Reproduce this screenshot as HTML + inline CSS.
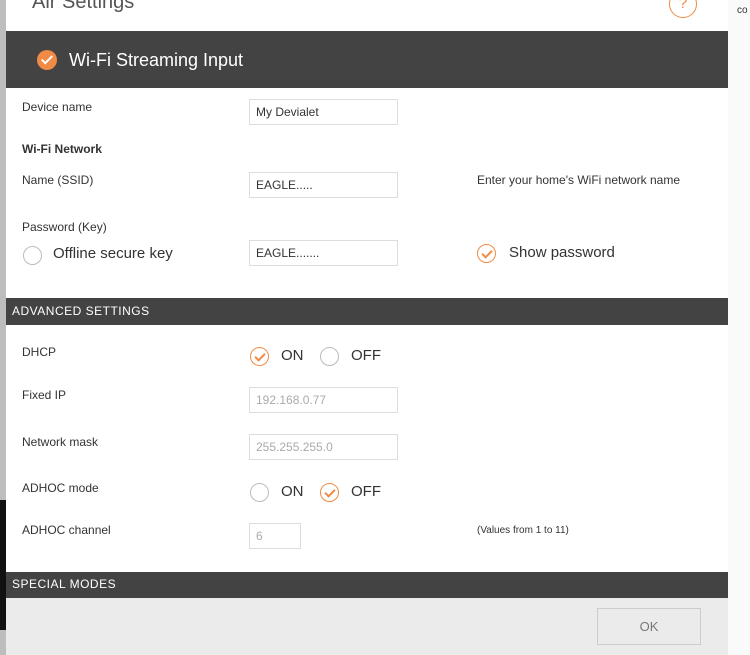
<!DOCTYPE html>
<html><head><style>
body{margin:0;width:750px;height:655px;position:relative;overflow:hidden;background:#fff;font-family:"Liberation Sans",sans-serif;color:#333}
.a{position:absolute}
.t{font-size:12px;color:#333}
.in{position:absolute;border:1px solid #ddd;background:#fff;font-size:12px;padding-left:6px;box-sizing:border-box;line-height:24px}
.bar{position:absolute;left:6px;width:722px;background:#434343;color:#fff;font-size:12px;letter-spacing:.5px}
.rad{position:absolute;width:17px;height:17px;border:1.5px solid #bbb;border-radius:50%}
.chk{position:absolute;width:17px;height:17px;border:1.5px solid #f08a45;border-radius:50%}
.chk:after{content:"";position:absolute;left:6px;top:3px;width:4px;height:8px;border:solid #f08a45;border-width:0 2px 2px 0;transform:rotate(45deg)}
</style></head><body>
<div class="a" style="left:0;top:0;width:6px;height:655px;background:#bdbdbd"></div>
<div class="a" style="left:0;top:500px;width:6px;height:130px;background:#111"></div>
<div class="a" style="left:6px;top:0;width:722px;height:598px;background:#fff"></div>
<div class="a" style="left:6px;top:598px;width:722px;height:57px;background:#ebebeb"></div>
<div class="a" style="left:728px;top:0;width:22px;height:655px;background:#fafafa"></div>
<div class="a" style="left:32px;top:-9px;font-size:20px;color:#555">Air Settings</div>
<div class="a" style="left:669px;top:-10px;width:26px;height:26px;border:1.5px solid #f08a45;border-radius:50%;color:#f08a45;text-align:center;font-size:16px;line-height:26px">?</div>
<div class="a" style="left:737px;top:5px;font-size:10px">co</div>
<div class="bar" style="top:31px;height:57px"></div>
<div class="a" style="left:37px;top:50px;width:20px;height:20px;border-radius:50%;background:#f08a45"></div>
<div class="a" style="left:44px;top:53px;width:4px;height:9px;border:solid #fff;border-width:0 2px 2px 0;transform:rotate(45deg)"></div>
<div class="a" style="left:69px;top:50px;font-size:18px;color:#fff">Wi-Fi Streaming Input</div>

<div class="a t" style="left:22px;top:100px">Device name</div>
<div class="in" style="left:249px;top:99px;width:149px;height:26px">My Devialet</div>
<div class="a t" style="left:22px;top:142px;font-weight:bold">Wi-Fi Network</div>
<div class="a t" style="left:22px;top:173px">Name (SSID)</div>
<div class="in" style="left:249px;top:172px;width:149px;height:26px">EAGLE.....</div>
<div class="a t" style="left:477px;top:173px">Enter your home's WiFi network name</div>
<div class="a t" style="left:22px;top:220px">Password (Key)</div>
<div class="rad" style="left:23px;top:246px"></div>
<div class="a" style="left:53px;top:245px;font-size:15px">Offline secure key</div>
<div class="in" style="left:249px;top:240px;width:149px;height:26px">EAGLE.......</div>
<div class="chk" style="left:477px;top:244px"></div>
<div class="a" style="left:509px;top:244px;font-size:15px">Show password</div>

<div class="bar" style="top:298px;height:27px;line-height:27px;padding-left:6px;box-sizing:border-box">ADVANCED SETTINGS</div>
<div class="a t" style="left:22px;top:345px">DHCP</div>
<div class="chk" style="left:250px;top:347px"></div>
<div class="a" style="left:281px;top:347px;font-size:15px">ON</div>
<div class="rad" style="left:320px;top:347px"></div>
<div class="a" style="left:351px;top:347px;font-size:15px">OFF</div>
<div class="a t" style="left:22px;top:388px">Fixed IP</div>
<div class="in" style="left:249px;top:387px;width:149px;height:26px;color:#aaa">192.168.0.77</div>
<div class="a t" style="left:22px;top:435px">Network mask</div>
<div class="in" style="left:249px;top:434px;width:149px;height:26px;color:#aaa">255.255.255.0</div>
<div class="a t" style="left:22px;top:481px">ADHOC mode</div>
<div class="rad" style="left:250px;top:483px"></div>
<div class="a" style="left:281px;top:483px;font-size:15px">ON</div>
<div class="chk" style="left:320px;top:483px"></div>
<div class="a" style="left:351px;top:483px;font-size:15px">OFF</div>
<div class="a t" style="left:22px;top:523px">ADHOC channel</div>
<div class="in" style="left:249px;top:523px;width:52px;height:26px;color:#aaa">6</div>
<div class="a" style="left:477px;top:525px;font-size:10px">(Values from 1 to 11)</div>
<div class="bar" style="top:572px;height:26px;line-height:24px;padding-left:6px;box-sizing:border-box">SPECIAL MODES</div>
<div class="a" style="left:597px;top:608px;width:104px;height:37px;border:1px solid #ccc;box-sizing:border-box;text-align:center;line-height:35px;font-size:13px;color:#777">OK</div>
</body></html>
